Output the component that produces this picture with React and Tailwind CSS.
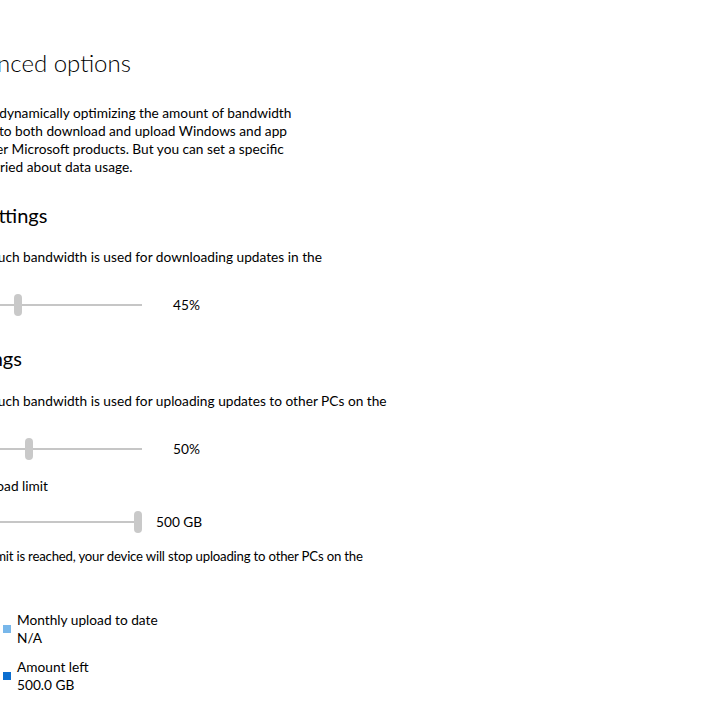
import React from "react";

const font = { fontFamily: 'Lato, "Noto Sans", sans-serif' };

function Checkbox() {
  return <div className="w-[20px] h-[20px] border-2 border-black bg-white shrink-0" />;
}

function Slider({ value, gap, label }) {
  return (
    <div className="flex items-center h-[24px] pl-[20px]">
      <div className="relative w-[226px] h-[24px] shrink-0">
        <div className="absolute left-0 right-0 top-[11px] h-[2px] bg-[#c6c6c6]" />
        <div
          className="absolute top-[1px] w-[8px] h-[22px] rounded-full bg-[#c9c9c9]"
          style={{ left: `${(value / 100) * 218}px` }}
        />
      </div>
      <span className="text-[13.7px] leading-[18px] whitespace-nowrap" style={{ marginLeft: gap }}>
        {label}
      </span>
    </div>
  );
}

function Line({ children }) {
  return <div className="whitespace-nowrap">{children}</div>;
}

function Legend({ color, title, value }) {
  return (
    <div className="flex items-center gap-[6px]">
      <div className={`w-[8px] h-[8px] ${color}`} />
      <div className="text-[13.7px] leading-[18px]">
        <Line>{title}</Line>
        <Line>{value}</Line>
      </div>
    </div>
  );
}

export default function App() {
  return (
    <div className="w-[720px] h-[720px] overflow-hidden bg-white text-black" style={font}>
      <div className="-ml-[104px] w-[600px] pt-[47px]">
        <h1 className="pl-[49px] text-[24px] leading-[32px] font-light whitespace-nowrap">
          Advanced options
        </h1>

        <div className="mt-[25px] text-[13.7px] leading-[18px]">
          <Line>By default, we&apos;re dynamically optimizing the amount of bandwidth</Line>
          <Line>your device uses to both download and upload Windows and app</Line>
          <Line>updates, and other Microsoft products. But you can set a specific</Line>
          <Line>limit if you&apos;re worried about data usage.</Line>
        </div>

        <h2 className="mt-[25px] -ml-[12px] text-[20px] leading-[28px] whitespace-nowrap">
          Download settings
        </h2>

        <div className="mt-[19px] flex items-start gap-[8px] text-[13.7px] leading-[18px]">
          <Checkbox />
          <div>
            <Line>Limit how much bandwidth is used for downloading updates in the</Line>
            <Line>background</Line>
          </div>
        </div>

        <div className="mt-[9px]">
          <Slider value={45} gap={31} label="45%" />
        </div>

        <h2 className="mt-[27px] -ml-[10px] text-[20px] leading-[28px] whitespace-nowrap">
          Upload settings
        </h2>

        <div className="mt-[20px] flex items-start gap-[8px] text-[13.7px] leading-[18px]">
          <Checkbox />
          <div>
            <Line>Limit how much bandwidth is used for uploading updates to other PCs on the</Line>
            <Line>Internet</Line>
          </div>
        </div>

        <div className="mt-[9px]">
          <Slider value={50} gap={31} label="50%" />
        </div>

        <div className="mt-[16px] flex items-start gap-[8px] text-[13.7px] leading-[18px]">
          <Checkbox />
          <Line>Monthly upload limit</Line>
        </div>

        <div className="mt-[13px]">
          <Slider value={100} gap={14} label="500 GB" />
        </div>

        <div className="mt-[13px] pl-[34px] text-[13.2px] tracking-[-0.2px] leading-[18px]">
          <Line>When the limit is reached, your device will stop uploading to other PCs on the</Line>
          <Line>Internet.</Line>
        </div>

        <div className="mt-[28px] pl-[107px] flex flex-col gap-[11px]">
          <Legend color="bg-[#78b7ea]" title="Monthly upload to date" value="N/A" />
          <Legend color="bg-[#0b6ed0]" title="Amount left" value="500.0 GB" />
        </div>
      </div>
    </div>
  );
}
